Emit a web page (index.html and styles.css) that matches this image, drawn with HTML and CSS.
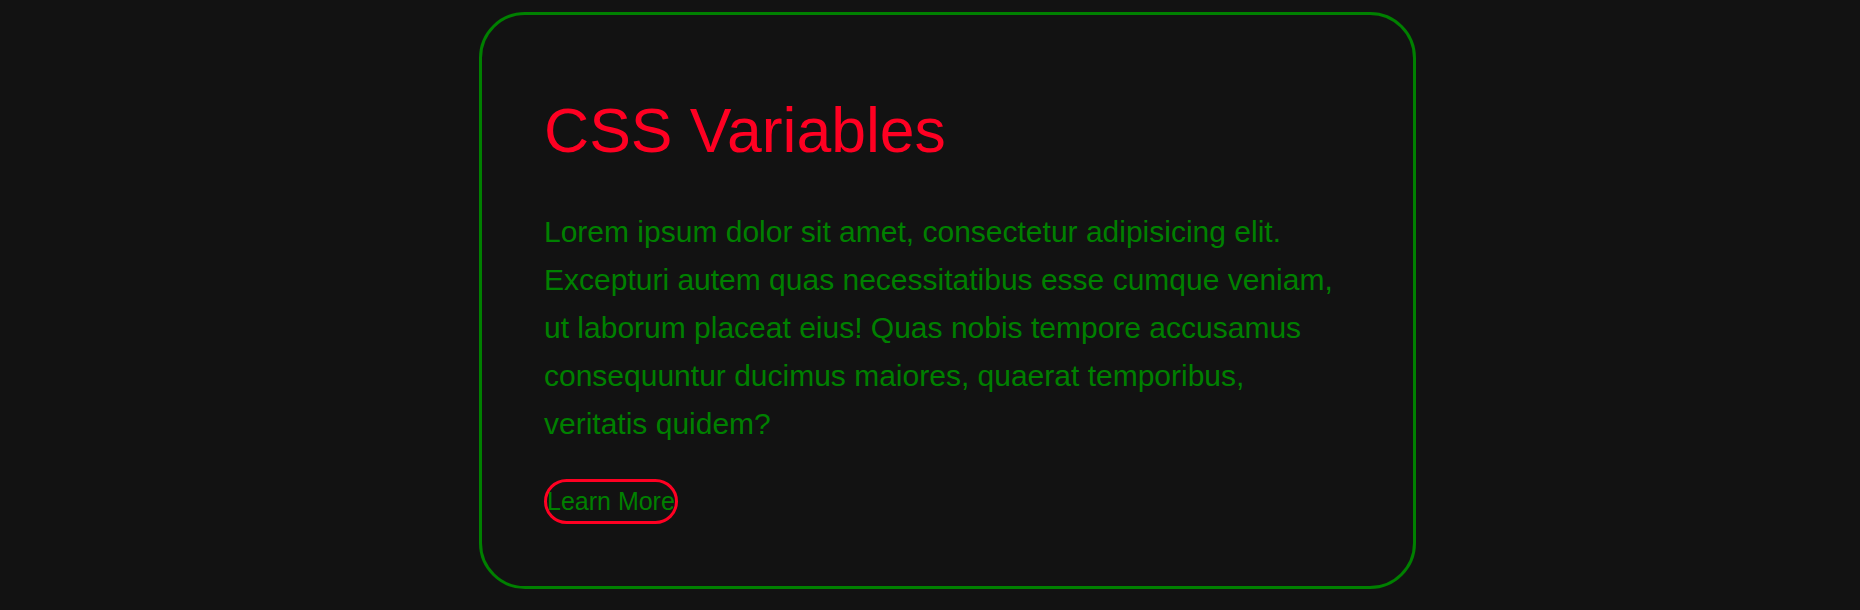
FILE: index.html
```html
<!DOCTYPE html>
<html lang="en">
<head>
<meta charset="utf-8">
<title>CSS Variables</title>
<link rel="stylesheet" href="styles.css">
</head>
<body>
<main class="page">
  <section class="card">
    <h1 class="card-title">CSS Variables</h1>
    <p class="card-text">Lorem ipsum dolor sit amet, consectetur adipisicing elit. Excepturi autem quas necessitatibus esse cumque veniam, ut laborum placeat eius! Quas nobis tempore accusamus consequuntur ducimus maiores, quaerat temporibus, veritatis quidem?</p>
    <a class="card-btn" href="#">Learn More</a>
  </section>
</main>
</body>
</html>
```
FILE: styles.css
```css
:root {
  --bg: #121212;
  --green: #008000;
  --red: #ff0022;
}
* { box-sizing: border-box; }
html, body {
  margin: 0;
  background: var(--bg);
}
body {
  font-family: Arial, "Liberation Sans", sans-serif;
  height: 610px;
  overflow: hidden;
}
.page {
  display: flex;
  justify-content: center;
  padding: 12px 0 0 35px;
}
.card {
  width: 937px;
  border: 3px solid var(--green);
  border-radius: 46px;
  padding: 62px;
  display: flex;
  flex-direction: column;
  align-items: flex-start;
}
.card-title {
  margin: 16px 0 41px;
  font-size: 62.5px;
  font-weight: normal;
  line-height: 74px;
  color: var(--red);
}
.card-text {
  margin: 0 0 31px;
  font-size: 30px;
  line-height: 48px;
  color: var(--green);
}
.card-btn {
  display: inline-block;
  font-size: 25px;
  line-height: 29px;
  padding: 5px 0;
  border: 3px solid var(--red);
  border-radius: 24px;
  color: var(--green);
  text-decoration: none;
}
```
